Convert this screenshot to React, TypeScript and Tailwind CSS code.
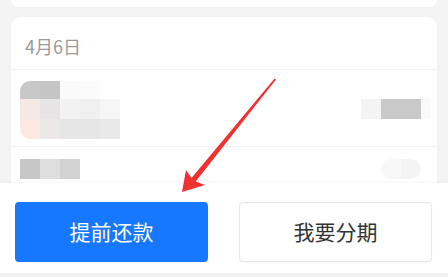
const font = { fontFamily: '"Noto Sans CJK SC", "Noto Sans", sans-serif' }

type Cell = { c: string; w?: number }

function Mosaic({ rows, h, className = '' }: { rows: Cell[][]; h: number[]; className?: string }) {
  return (
    <div className={`flex flex-col ${className}`}>
      {rows.map((row, i) => (
        <div key={i} className="flex" style={{ height: h[i] }}>
          {row.map((cell, j) => (
            <div key={j} style={{ width: cell.w ?? 20, background: cell.c }} />
          ))}
        </div>
      ))}
    </div>
  )
}

function Arrow() {
  return (
    <svg className="absolute left-0 top-0 pointer-events-none" width="448" height="277" viewBox="0 0 448 277">
      <polygon
        points="276,79.5 195.7,181.5 205,185 182,192 186,170 191.5,178.1 274.6,78.6"
        fill="#f0312f"
      />
    </svg>
  )
}

export default function App() {
  return (
    <div className="relative w-[448px] h-[277px] bg-[#f4f4f4] flex flex-col overflow-hidden" style={font}>
      <div className="flex-1 overflow-hidden px-[11px] flex flex-col gap-[10px]">
        <div className="h-[7px] shrink-0 bg-white rounded-b-[10px]" />
        <div className="flex-1 bg-white rounded-t-[10px] flex flex-col">
          <div className="h-[53px] shrink-0 flex items-center pt-[6px] px-[14px] text-[18px] text-[#9a9a9a] border-b border-[#f1f1f1]">
            4月6日
          </div>
          <div className="h-[77px] shrink-0 border-b border-[#f1f1f1] flex items-start justify-between pl-[9px] pr-[6px]">
            <Mosaic
              className="mt-[11px] rounded-l-[10px] overflow-hidden"
              h={[18, 20, 20]}
              rows={[
                [{ c: '#c8c8c8' }, { c: '#c5c5c5' }, { c: '#fafafa' }, { c: '#fbfbfb' }, { c: '#ffffff' }],
                [{ c: '#f6e9e5' }, { c: '#e6e4e4' }, { c: '#f2f2f2' }, { c: '#f0f0f0' }, { c: '#f6f6f6' }],
                [{ c: '#fbe8e0' }, { c: '#ebe8e7' }, { c: '#e6e6e6' }, { c: '#e6e6e6' }, { c: '#e9e9e9' }],
              ]}
            />
            <Mosaic
              className="mt-[29px]"
              h={[20]}
              rows={[[{ c: '#f4f4f4' }, { c: '#c9c9c9' }, { c: '#c9c9c9' }, { c: '#fafafa', w: 10 }]]}
            />
          </div>
          <div className="flex-1 flex items-start justify-between pl-[9px] pr-[16px]">
            <Mosaic
              className="mt-[12px]"
              h={[20]}
              rows={[[{ c: '#c7c7c7' }, { c: '#dedede' }, { c: '#d2d2d2' }]]}
            />
            <Mosaic
              className="mt-[12px] rounded-full overflow-hidden"
              h={[20]}
              rows={[[{ c: '#f8f8f8' }, { c: '#f4f4f4' }]]}
            />
          </div>
        </div>
      </div>
      <div className="h-[90px] shrink-0 bg-white shadow-[0_-1px_3px_rgba(0,0,0,0.04)] flex items-start justify-between pt-[19px] pl-[15px] pr-[16px]">
        <button className="w-[193px] h-[60px] rounded-[4px] bg-[#1677ff] text-white text-[21px]">
          提前还款
        </button>
        <button className="w-[193px] h-[60px] rounded-[4px] bg-white border border-[#e6e6e6] text-[#333333] text-[21px] shadow-[0_1px_2px_rgba(0,0,0,0.04)]">
          我要分期
        </button>
      </div>
      <div className="h-[4px] shrink-0 bg-[#f2f2f2]" />
      <Arrow />
    </div>
  )
}
